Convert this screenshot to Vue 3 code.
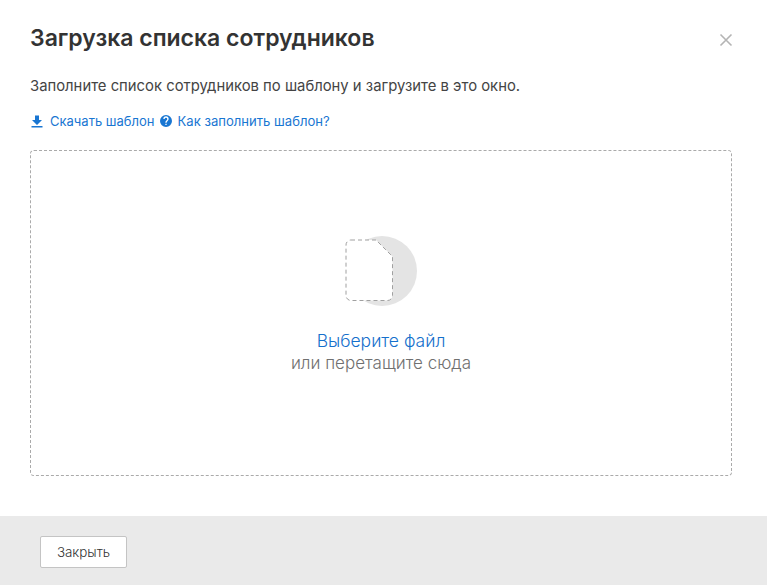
<script setup>
</script>

<template>
  <div class="modal">
    <main class="body">
      <header class="head">
        <h1 class="title">Загрузка списка сотрудников</h1>
        <button class="close" aria-label="Закрыть">
          <svg width="14" height="14" viewBox="0 0 14 14"><path d="M1.500 1.500l11 11M12.500 1.500l-11 11" stroke="#b4b4b4" stroke-width="1.600" fill="none"/></svg>
        </button>
      </header>
      <p class="lead">Заполните список сотрудников по шаблону и загрузите в это окно.</p>
      <div class="links">
        <a class="link">
          <svg width="12" height="13" viewBox="0 0 12 13"><path d="M4 0.500h4v4.500h3L6 10 1 5h3zM0.500 11h11v1.600H0.500z" fill="#1976d2"/></svg>
          <span>Скачать шаблон</span>
        </a>
        <a class="link link-help">
          <svg width="12" height="12" viewBox="0 0 24 24"><path fill="#1976d2" d="M12 0a12 12 0 100 24 12 12 0 000-24zm1.300 20h-2.600v-2.600h2.600zm2.700-8.800l-1.200 1.200c-1 1-1.500 1.700-1.500 3.300h-2.600v-.7c0-1.400.5-2.700 1.500-3.600l1.600-1.600c.5-.5.7-1.100.7-1.800a2.600 2.600 0 00-5.200 0H6.700a5.300 5.300 0 0110.600 0c0 1.200-.5 2.200-1.300 3.200z"/></svg>
          <span>Как заполнить шаблон?</span>
        </a>
      </div>
      <div class="drop">
        <svg class="doc" width="74" height="72" viewBox="0 0 74 72">
          <circle cx="39" cy="36" r="35" fill="#e4e4e4"/>
          <path d="M8 4.500H33L49.500 21V60a5 5 0 01-5 5H8a5 5 0 01-5-5V9.500a5 5 0 015-5z" transform="translate(0 0.500)" fill="#fff" stroke="#a0a0a0" stroke-width="1" stroke-dasharray="4 3"/>
        </svg>
        <div class="pick">Выберите файл</div>
        <div class="hint">или перетащите сюда</div>
      </div>
    </main>
    <footer class="foot">
      <button class="btn">Закрыть</button>
    </footer>
  </div>
</template>

<style scoped>
.modal {
  width: 767px;
  height: 585px;
  display: flex;
  flex-direction: column;
  background: #fff;
  font-family: Inter, "Noto Sans", sans-serif;
  color: #333;
}
.body {
  flex: 1;
  padding: 0 35px 0 30px;
  display: flex;
  flex-direction: column;
}
.head {
  display: flex;
  justify-content: space-between;
  align-items: center;
  height: 75px;
}
.title {
  margin: 0;
  font-size: 23px;
  font-weight: 600;
  color: #333;
}
.close {
  border: 0;
  background: none;
  padding: 0;
  display: flex;
  margin-right: -1px;
  margin-top: 5px;
}
.lead {
  margin: 0;
  margin-top: 1px;
  font-size: 14.830px;
  line-height: 20px;
  color: #444;
}
.links {
  display: flex;
  gap: 6px;
  margin-top: 15px;
  margin-left: 1px;
  height: 20px;
  align-items: center;
}
.link {
  display: flex;
  align-items: center;
  gap: 7px;
  font-size: 13px;
  color: #1976d2;
}
.link-help {
  gap: 5px;
  font-size: 13.100px;
}
.drop {
  margin-top: 19px;
  height: 326px;
  box-sizing: border-box;
  border: 1px dashed #aaa;
  border-radius: 4px;
  display: flex;
  flex-direction: column;
  align-items: center;
  padding-top: 84px;
}
.doc {
  margin-left: -2px;
}
.pick {
  margin-top: 23px;
  font-size: 17.500px;
  line-height: 22px;
  font-weight: 300;
  color: #1570cc;
}
.hint {
  font-size: 17px;
  line-height: 22px;
  font-weight: 300;
  color: #707070;
}
.foot {
  height: 69px;
  background: #eaeaea;
  padding: 20px 40px 0;
  box-sizing: border-box;
}
.btn {
  width: 87px;
  height: 32px;
  background: #fff;
  border: 1px solid #c4c4c4;
  border-radius: 2px;
  font: 300 13.400px Inter, "Noto Sans", sans-serif;
  color: #333;
}
</style>
